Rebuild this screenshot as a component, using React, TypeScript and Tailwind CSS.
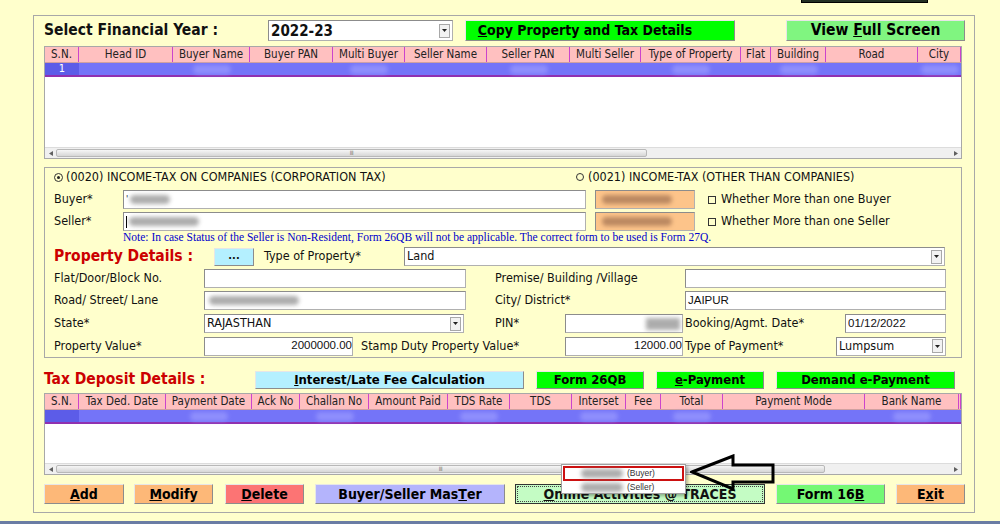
import React from 'react';

type Col = [string, string];

const cols1: Col[] = [
  ['S.N.', 'w-[34px]'], ['Head ID', 'w-[94px]'], ['Buyer Name', 'w-[77px]'], ['Buyer PAN', 'w-[83px]'],
  ['Multi Buyer', 'w-[72px]'], ['Seller Name', 'w-[82px]'], ['Seller PAN', 'w-[83px]'], ['Multi Seller', 'w-[71px]'],
  ['Type of Property', 'w-[100px]'], ['Flat', 'w-[30px]'], ['Building', 'w-[55px]'], ['Road', 'w-[92px]'], ['City', 'flex-1'],
];

const cols2: Col[] = [
  ['S.N.', 'w-[34px]'], ['Tax Ded. Date', 'w-[87px]'], ['Payment Date', 'w-[86px]'], ['Ack No', 'w-[48px]'],
  ['Challan No', 'w-[69px]'], ['Amount Paid', 'w-[79px]'], ['TDS Rate', 'w-[62px]'], ['TDS', 'w-[62px]'],
  ['Interset', 'w-[54px]'], ['Fee', 'w-[35px]'], ['Total', 'w-[62px]'], ['Payment Mode', 'w-[142px]'],
  ['Bank Name', 'w-[94px]'], ['', 'flex-1'],
];

const Blur = ({ w, className = '' }: { w: string; className?: string }) => (
  <span className={`inline-block h-[9px] rounded-full bg-[#8a8a8a] blur-[2px] opacity-70 ${w} ${className}`} />
);

const Scroll = ({ thumb }: { thumb: string }) => (
  <div className="h-[11px] flex items-stretch bg-[#f0f0f0] border-t border-[#dcdcdc]">
    <div className="w-[11px] flex items-center justify-center">
      <svg width="4" height="5"><path d="M4 0 L0 2.5 L4 5 Z" fill="#606060" /></svg>
    </div>
    <div className={`${thumb} my-[1px] rounded-[2px] border border-[#b8b8b8] bg-gradient-to-b from-[#f6f6f6] to-[#d6d6d6] flex items-center justify-center`}>
      <span className="text-[6px] leading-none text-[#777] tracking-[-0.5px]">III</span>
    </div>
    <div className="flex-1" />
    <div className="w-[11px] flex items-center justify-center">
      <svg width="4" height="5"><path d="M0 0 L4 2.5 L0 5 Z" fill="#606060" /></svg>
    </div>
  </div>
);

const Grid = ({ cols, bodyH, thumb }: { cols: Col[]; bodyH: string; thumb: string }) => (
  <div className="w-[918px] border border-[#a8a8a8] bg-white flex flex-col">
    <div className="h-[16px] flex bg-[#ffc0c0] border-b border-[#d0a0a0]">
      {cols.map(([name, w], i) => (
        <div key={i} className={`${w} shrink-0 h-full flex items-center justify-center text-[11.5px] text-[#222] border-r border-[#cc44cc]`}>
          {name}
        </div>
      ))}
    </div>
    <div className="h-[14px] flex bg-[#7474f8] border-b-2 border-[#9030b0]">
      {cols.map(([name, w], i) => (
        <div key={i} className={`${w} shrink-0 h-full flex items-center justify-center ${i === 0 ? 'bg-[#5c5ce8] text-white text-[11px]' : ''}`}>
          {i === 0 && cols === cols1 ? '1' : i > 0 && i % 2 === 0 ? <Blur w="w-[38px]" className="bg-[#9a9aff]" /> : null}
        </div>
      ))}
    </div>
    <div className={`${bodyH} bg-white`} />
    <Scroll thumb={thumb} />
  </div>
);

const Btn = ({ w, bg, size = 'text-[13px]', children }: { w: string; bg: string; size?: string; children: React.ReactNode }) => (
  <div className={`${w} ${bg} ${size} shrink-0 h-full flex items-center justify-center font-bold text-black border border-[#8c8c8c] border-t-[#e6e6e6] border-l-[#e6e6e6]`}>
    {children}
  </div>
);

const Input = ({ w, children, right = false, bg = 'bg-white' }: { w: string; children?: React.ReactNode; right?: boolean; bg?: string }) => (
  <div className={`${w} ${bg} shrink-0 h-[19px] border border-[#b0b0b0] border-t-[#8c8c8c] border-l-[#8c8c8c] flex items-center px-[2px] ${right ? 'justify-end' : ''}`}>
    {children}
  </div>
);

const Select = ({ w, children, h = 'h-[19px]' }: { w: string; children?: React.ReactNode; h?: string }) => (
  <div className={`${w} ${h} shrink-0 bg-white border border-[#b0b0b0] border-t-[#8c8c8c] border-l-[#8c8c8c] flex items-center pl-[2px] pr-[2px]`}>
    <div className="flex-1">{children}</div>
    <div className="w-[11px] h-[14px] border border-[#a8a8a8] bg-[#f2f2f2] flex items-center justify-center">
      <svg width="5" height="3"><path d="M0 0 L5 0 L2.5 3 Z" fill="#222" /></svg>
    </div>
  </div>
);

const Check = () => <span className="inline-block w-[8px] h-[8px] border border-[#333] mr-[5px]" />;

const App: React.FC = () => {
  return (
    <div className="w-[1000px] h-[524px] bg-[#ffffcc] flex flex-col overflow-hidden relative font-['DejaVu_Sans_Condensed','DejaVu_Sans',sans-serif] text-[#111]">
      <div className="h-[3px] flex pl-[801px]">
        <div className="w-[127px] bg-[#233023] border-x border-b border-black" />
      </div>

      <div className="ml-[33px] mt-[12px] w-[942px] h-[498px] border border-[#a8a8a8] flex flex-col pl-[10px] pt-[4px]">
        {/* top row */}
        <div className="h-[21px] flex items-center">
          <div className="w-[224px] shrink-0 text-[15.5px] font-bold">Select Financial Year :</div>
          <Select w="w-[185px]" h="h-[21px]"><span className="text-[15px] font-bold">2022-23</span></Select>
          <div className="w-[12px]" />
          <Btn w="w-[270px]" bg="bg-[#00ff00]" size="text-[14px]">
            <span className="mr-[30px]"><span className="underline">C</span>opy Property and Tax Details</span>
          </Btn>
          <div className="w-[51px]" />
          <Btn w="w-[179px]" bg="bg-[#80f580]" size="text-[15.5px]">
            <span>View <span className="underline">F</span>ull Screen</span>
          </Btn>
        </div>

        {/* first grid */}
        <div className="mt-[5px]">
          <Grid cols={cols1} bodyH="h-[70px]" thumb="w-[591px]" />
        </div>

        {/* details box */}
        <div className="mt-[8px] w-[918px] h-[191px] border border-[#a8a8a8] flex flex-col pl-[9px] text-[12.5px]">
          <div className="mt-[1px] h-[16px] flex items-center">
            <div className="w-[522px] flex items-center">
              <span className="w-[9px] h-[9px] rounded-full border border-[#333] flex items-center justify-center mr-[3px]">
                <span className="w-[3px] h-[3px] rounded-full bg-[#222]" />
              </span>
              (0020) INCOME-TAX ON COMPANIES (CORPORATION TAX)
            </div>
            <span className="w-[8px] h-[8px] rounded-full border border-[#333] mr-[4px]" />
            (0021) INCOME-TAX (OTHER THAN COMPANIES)
          </div>

          <div className="mt-[5px] h-[19px] flex items-center">
            <div className="w-[69px] shrink-0">Buyer*</div>
            <Input w="w-[463px]"><span className="text-[9px] mr-[2px]">'</span><Blur w="w-[40px]" /></Input>
            <div className="w-[9px]" />
            <Input w="w-[100px]" bg="bg-[#fdc48a]"><Blur w="w-[70px]" className="ml-[4px] bg-[#a07050]" /></Input>
            <div className="w-[13px]" />
            <Check />Whether More than one Buyer
          </div>

          <div className="mt-[3px] h-[19px] flex items-center">
            <div className="w-[69px] shrink-0">Seller*</div>
            <Input w="w-[463px]"><span className="w-[1px] h-[12px] bg-black mr-[2px]" /><Blur w="w-[70px]" /></Input>
            <div className="w-[9px]" />
            <Input w="w-[100px]" bg="bg-[#fdc48a]"><Blur w="w-[70px]" className="ml-[4px] bg-[#a07050]" /></Input>
            <div className="w-[13px]" />
            <Check />Whether More than one Seller
          </div>

          <div className="h-[13px] flex items-center pl-[69px] font-['Liberation_Serif',serif] text-[11.5px] text-[#0000cc]">
            Note: In case Status of the Seller is Non-Resident, Form 26QB will not be applicable. The correct form to be used is Form 27Q.
          </div>

          <div className="mt-[3px] h-[19px] flex items-center">
            <div className="w-[160px] shrink-0 text-[15.5px] font-bold text-[#cc0000]">Property Details :</div>
            <div className="w-[40px] h-[18px] shrink-0 bg-[#b4f0ff] border border-[#8c8c8c] border-t-[#e6e6e6] border-l-[#e6e6e6] flex items-center justify-center font-bold text-[11px]">...</div>
            <div className="w-[10px]" />
            <div className="w-[140px] shrink-0 self-start">Type of Property*</div>
            <Select w="w-[541px]">Land</Select>
          </div>

          <div className="mt-[3px] h-[19px] flex items-center">
            <div className="w-[150px] shrink-0">Flat/Door/Block No.</div>
            <Input w="w-[262px]" />
            <div className="w-[29px]" />
            <div className="w-[190px] shrink-0">Premise/ Building /Village</div>
            <Input w="w-[261px]" />
          </div>

          <div className="mt-[3px] h-[19px] flex items-center">
            <div className="w-[150px] shrink-0">Road/ Street/ Lane</div>
            <Input w="w-[262px]"><Blur w="w-[90px]" className="ml-[2px] opacity-40" /></Input>
            <div className="w-[29px]" />
            <div className="w-[190px] shrink-0">City/ District*</div>
            <Input w="w-[261px]"><span className="font-['Liberation_Sans',sans-serif] text-[11.5px]">JAIPUR</span></Input>
          </div>

          <div className="mt-[4px] h-[19px] flex items-center">
            <div className="w-[150px] shrink-0">State*</div>
            <Select w="w-[260px]">RAJASTHAN</Select>
            <div className="w-[31px]" />
            <div className="w-[70px] shrink-0">PIN*</div>
            <Input w="w-[118px]" right><Blur w="w-[34px]" className="h-[12px] rounded-none" /></Input>
            <div className="w-[2px]" />
            <div className="w-[160px] shrink-0">Booking/Agmt. Date*</div>
            <Input w="w-[101px]"><span className="font-['Liberation_Sans',sans-serif] text-[11.5px]">01/12/2022</span></Input>
          </div>

          <div className="mt-[3px] h-[20px] flex items-center">
            <div className="w-[150px] shrink-0">Property Value*</div>
            <Input w="w-[149px]" right><span className="font-['Liberation_Sans',sans-serif] text-[11.5px] -mr-[2px]">2000000.00</span></Input>
            <div className="w-[8px]" />
            <div className="w-[204px] shrink-0">Stamp Duty Property Value*</div>
            <Input w="w-[118px]" right><span className="font-['Liberation_Sans',sans-serif] text-[11.5px] -mr-[2px]">12000.00</span></Input>
            <div className="w-[2px]" />
            <div className="w-[151px] shrink-0">Type of Payment*</div>
            <Select w="w-[110px]">Lumpsum</Select>
          </div>
        </div>

        {/* tax deposit row */}
        <div className="mt-[13px] h-[18px] flex items-center">
          <div className="w-[211px] shrink-0 text-[15.5px] font-bold text-[#cc0000]">Tax Deposit Details :</div>
          <Btn w="w-[269px]" bg="bg-[#b4f0ff]"><span className="underline">I</span>nterest/Late Fee Calculation</Btn>
          <div className="w-[12px]" />
          <Btn w="w-[108px]" bg="bg-[#00ff00]">Form 26QB</Btn>
          <div className="w-[12px]" />
          <Btn w="w-[108px]" bg="bg-[#00ff00]"><span className="underline">e</span>-Payment</Btn>
          <div className="w-[12px]" />
          <Btn w="w-[179px]" bg="bg-[#00ff00]">Demand e-Payment</Btn>
        </div>

        {/* second grid */}
        <div className="mt-[4px]">
          <Grid cols={cols2} bodyH="h-[39px]" thumb="w-[769px]" />
        </div>

        {/* bottom buttons */}
        <div className="mt-[9px] h-[20px] flex items-center">
          <Btn w="w-[80px]" bg="bg-[#fdb878]" size="text-[14px]"><span className="underline">A</span>dd</Btn>
          <div className="w-[10px]" />
          <Btn w="w-[79px]" bg="bg-[#fdb878]" size="text-[14px]"><span className="underline">M</span>odify</Btn>
          <div className="w-[12px]" />
          <Btn w="w-[79px]" bg="bg-[#fc7474]" size="text-[14px]"><span className="underline">D</span>elete</Btn>
          <div className="w-[11px]" />
          <Btn w="w-[190px]" bg="bg-[#b4b4fc]" size="text-[14px]">Buyer/Seller Mas<span className="underline">T</span>er</Btn>
          <div className="w-[10px]" />
          <div className="w-[250px] h-full shrink-0 bg-[#c4fcc4] border border-[#333] flex items-center justify-center p-[1px]">
            <div className="w-full h-full border border-dotted border-[#444] flex items-center justify-center font-bold text-[14px]">
              <span><span className="underline">O</span>nline Activities @ TRACES</span>
            </div>
          </div>
          <div className="w-[11px]" />
          <Btn w="w-[109px]" bg="bg-[#74f874]" size="text-[14px]">Form 16<span className="underline">B</span></Btn>
          <div className="w-[11px]" />
          <Btn w="w-[69px]" bg="bg-[#fdb878]" size="text-[14px]">E<span className="underline">x</span>it</Btn>
        </div>
      </div>

      <div className="mt-auto h-[3px] bg-[#6a7ca4]" />

      {/* popup menu */}
      <div className="absolute left-[561px] top-[464px] w-[125px] h-[30px] bg-white border border-[#a0a0a0] shadow-[2px_2px_3px_rgba(0,0,0,0.3)] flex flex-col p-[1px] font-['Liberation_Sans',sans-serif] text-[8.5px] text-[#333]">
        <div className="h-[15px] border-2 border-[#cc1111] flex items-center pl-[16px]">
          <Blur w="w-[42px]" className="h-[8px] opacity-50" />
          <span className="ml-[4px]">(Buyer)</span>
        </div>
        <div className="h-[12px] flex items-center pl-[18px]">
          <Blur w="w-[42px]" className="h-[8px] opacity-50" />
          <span className="ml-[4px]">(Seller)</span>
        </div>
      </div>

      {/* pointer arrow */}
      <svg className="absolute left-[690px] top-[454px]" width="88" height="38">
        <path d="M2 18 L43 2 L43 11 L83 11 L83 28 L43 28 L43 35 Z" fill="none" stroke="#000" strokeWidth="3" strokeLinejoin="miter" />
      </svg>
    </div>
  );
};

export default App;
